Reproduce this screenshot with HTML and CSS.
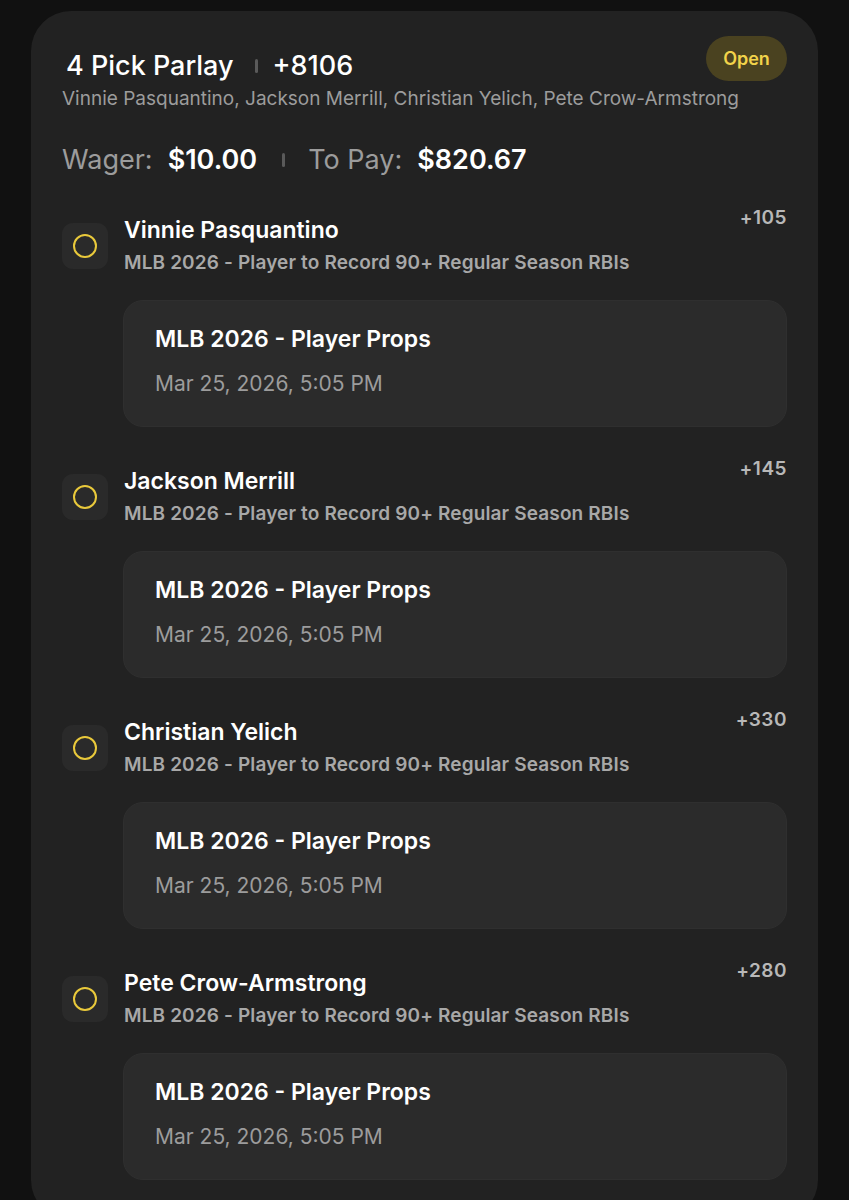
FILE: index.html
```html
<!DOCTYPE html>
<html lang="en">
<head>
  <meta charset="UTF-8">
  <title>4 Pick Parlay</title>
  <link rel="stylesheet" href="styles.css">
</head>
<body>
  <div class="bet-card">
    <div class="bet-header">
      <div class="bet-info">
        <div class="bet-title">
          <span>4 Pick Parlay</span>
          <span class="sep"></span>
          <span>+8106</span>
        </div>
        <div class="bet-players">Vinnie Pasquantino, Jackson Merrill, Christian Yelich, Pete Crow-Armstrong</div>
      </div>
      <div class="badge">Open</div>
    </div>

    <div class="bet-amounts">
      <span class="label">Wager:</span>
      <span class="amount">$10.00</span>
      <span class="sep"></span>
      <span class="label">To Pay:</span>
      <span class="amount">$820.67</span>
    </div>

    <div class="leg">
      <div class="leg-head">
        <div class="leg-icon"><span class="ring"></span></div>
        <div class="leg-text">
          <div class="leg-name">Vinnie Pasquantino</div>
          <div class="leg-market">MLB 2026 - Player to Record 90+ Regular Season RBIs</div>
        </div>
        <div class="leg-odds">+105</div>
      </div>
      <div class="event">
        <div class="event-title">MLB 2026 - Player Props</div>
        <div class="event-date">Mar 25, 2026, 5:05 PM</div>
      </div>
    </div>

    <div class="leg">
      <div class="leg-head">
        <div class="leg-icon"><span class="ring"></span></div>
        <div class="leg-text">
          <div class="leg-name">Jackson Merrill</div>
          <div class="leg-market">MLB 2026 - Player to Record 90+ Regular Season RBIs</div>
        </div>
        <div class="leg-odds">+145</div>
      </div>
      <div class="event">
        <div class="event-title">MLB 2026 - Player Props</div>
        <div class="event-date">Mar 25, 2026, 5:05 PM</div>
      </div>
    </div>

    <div class="leg">
      <div class="leg-head">
        <div class="leg-icon"><span class="ring"></span></div>
        <div class="leg-text">
          <div class="leg-name">Christian Yelich</div>
          <div class="leg-market">MLB 2026 - Player to Record 90+ Regular Season RBIs</div>
        </div>
        <div class="leg-odds">+330</div>
      </div>
      <div class="event">
        <div class="event-title">MLB 2026 - Player Props</div>
        <div class="event-date">Mar 25, 2026, 5:05 PM</div>
      </div>
    </div>

    <div class="leg">
      <div class="leg-head">
        <div class="leg-icon"><span class="ring"></span></div>
        <div class="leg-text">
          <div class="leg-name">Pete Crow-Armstrong</div>
          <div class="leg-market">MLB 2026 - Player to Record 90+ Regular Season RBIs</div>
        </div>
        <div class="leg-odds">+280</div>
      </div>
      <div class="event">
        <div class="event-title">MLB 2026 - Player Props</div>
        <div class="event-date">Mar 25, 2026, 5:05 PM</div>
      </div>
    </div>
  </div>
</body>
</html>
```

FILE: styles.css
```css
body {
  background: #111111;
  color: #ffffff;
  font-family: 'Inter', 'Roboto', sans-serif;
  margin: 0;
  padding: 11px 31px 0;
}

.bet-card {
  background: #222222;
  border-radius: 40px;
  padding: 25px 31px 40px;
}

.bet-header {
  display: flex;
  justify-content: space-between;
  align-items: flex-start;
}

.bet-info {
  flex: 1;
  min-width: 0;
  padding-top: 14px;
}

.bet-title {
  display: flex;
  align-items: center;
  padding-left: 4px;
  font-size: 27px;
  font-weight: 500;
  line-height: 32px;
}

.bet-title .sep {
  margin: 0 15px 0 21px;
}

.sep {
  display: inline-block;
  width: 3px;
  height: 14px;
  border-radius: 2px;
  background: #5a5a5a;
}

.bet-players {
  margin-top: 5px;
  font-size: 19px;
  line-height: 24px;
  color: #9c9c9c;
  white-space: nowrap;
}

.badge {
  width: 81px;
  height: 45px;
  flex-shrink: 0;
  border-radius: 23px;
  background: #4a4220;
  color: #f2d34a;
  font-size: 18px;
  font-weight: 600;
  display: flex;
  align-items: center;
  justify-content: center;
}

.bet-amounts {
  margin-top: 32px;
  display: flex;
  align-items: center;
  font-size: 27px;
  line-height: 34px;
}

.bet-amounts .label {
  color: #9c9c9c;
  margin-right: 15px;
}

.bet-amounts .amount {
  font-weight: 600;
}

.bet-amounts .sep {
  margin: 0 23px 0 25px;
}

.leg {
  margin-top: 29px;
}

.leg + .leg {
  margin-top: 30px;
}

.leg-head {
  display: flex;
  align-items: flex-start;
}

.leg-icon {
  width: 46px;
  height: 46px;
  margin-top: 17px;
  margin-right: 16px;
  border-radius: 11px;
  background: #2a2a2a;
  display: flex;
  align-items: center;
  justify-content: center;
}

.ring {
  width: 20px;
  height: 20px;
  border: 2px solid #e9c93b;
  border-radius: 50%;
}

.leg-text {
  flex: 1;
  padding-top: 10px;
}

.leg-name {
  font-size: 23px;
  font-weight: 600;
  line-height: 28px;
}

.leg-market {
  margin-top: 7px;
  font-size: 19px;
  font-weight: 600;
  line-height: 24px;
  letter-spacing: 0.14px;
  color: #a8a8a8;
}

.leg-odds {
  font-size: 19px;
  font-weight: 600;
  line-height: 24px;
  letter-spacing: 0.5px;
  color: #b8b8b8;
}

.event {
  margin: 25px 0 0 61px;
  padding: 24px 31px 29px;
  background: #2b2b2b;
  border: 1px solid #2f2f2f;
  border-radius: 20px;
}

.event-title {
  font-size: 23px;
  font-weight: 600;
  line-height: 28px;
}

.event-date {
  margin-top: 18px;
  font-size: 21px;
  line-height: 26px;
  color: #9c9c9c;
}
```
